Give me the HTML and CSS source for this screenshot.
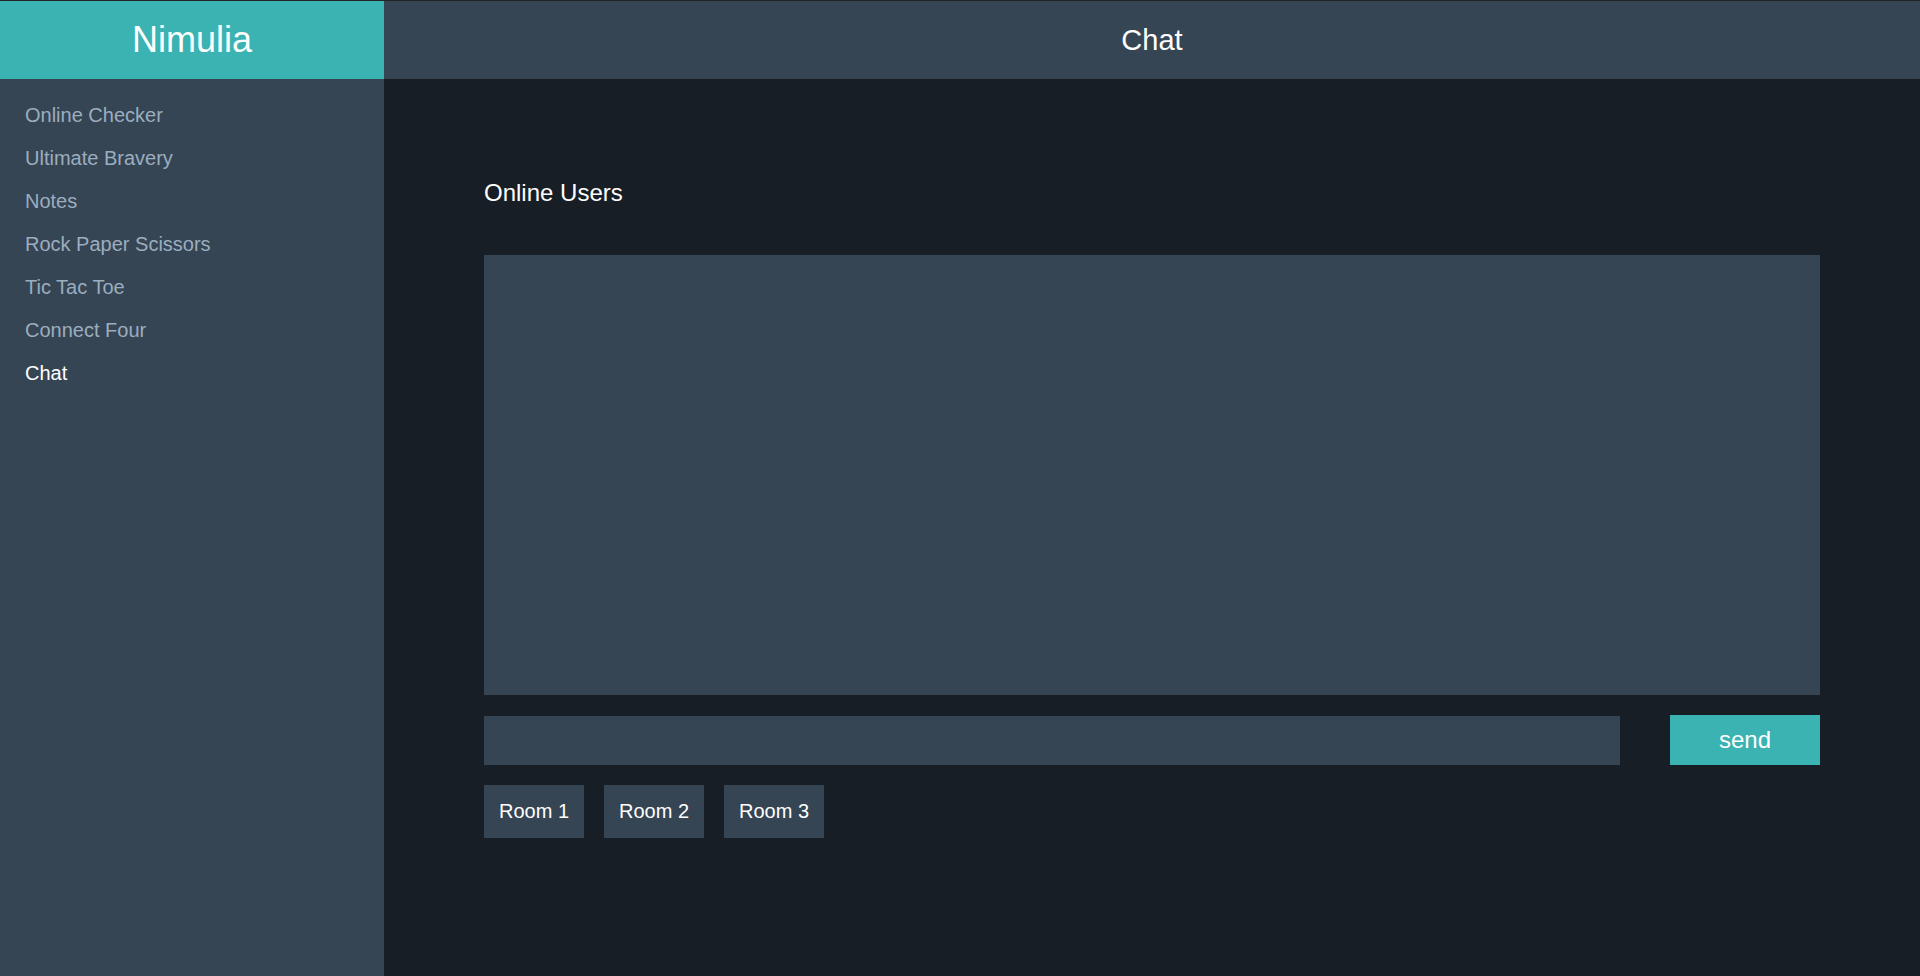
FILE: index.html
```html
<!DOCTYPE html>
<html lang="en">
<head>
<meta charset="utf-8">
<title>Nimulia - Chat</title>
<link rel="stylesheet" href="styles.css">
</head>
<body>
<div class="app">
  <div class="brand">Nimulia</div>
  <header class="topbar">Chat</header>
  <nav class="sidebar">
    <a class="nav-item" href="#">Online Checker</a>
    <a class="nav-item" href="#">Ultimate Bravery</a>
    <a class="nav-item" href="#">Notes</a>
    <a class="nav-item" href="#">Rock Paper Scissors</a>
    <a class="nav-item" href="#">Tic Tac Toe</a>
    <a class="nav-item" href="#">Connect Four</a>
    <a class="nav-item active" href="#">Chat</a>
  </nav>
  <main class="content">
    <h2 class="users-title">Online Users</h2>
    <div class="chat-box"></div>
    <div class="compose">
      <input class="msg-input" type="text">
      <button class="send-btn">send</button>
    </div>
    <div class="rooms">
      <button class="room-btn">Room 1</button>
      <button class="room-btn">Room 2</button>
      <button class="room-btn">Room 3</button>
    </div>
  </main>
</div>
</body>
</html>
```
FILE: styles.css
```css
* { box-sizing: border-box; }
html, body { margin: 0; padding: 0; height: 100%; }
body {
  font-family: "Liberation Sans", Arial, sans-serif;
  background: #171e26;
  border-top: 1px solid #232323;
}
.app {
  display: grid;
  grid-template-columns: 384px 1fr;
  grid-template-rows: 78px 1fr;
  height: calc(100vh - 1px);
}
.brand {
  background: #3ab3b2;
  color: #ffffff;
  font-size: 36px;
  display: flex;
  align-items: center;
  justify-content: center;
}
.topbar {
  background: #354554;
  color: #ffffff;
  font-size: 29px;
  display: flex;
  align-items: center;
  justify-content: center;
}
.sidebar {
  background: #354554;
  padding-top: 15px;
  display: flex;
  flex-direction: column;
}
.nav-item {
  display: block;
  padding: 10px 25px;
  line-height: 23px;
  font-size: 20px;
  color: #9cadbf;
  text-decoration: none;
}
.nav-item.active { color: #ffffff; }
.content {
  background: #171e26;
  padding: 100px;
  display: flex;
  flex-direction: column;
}
.users-title {
  margin: 0 0 48px 0;
  font-weight: normal;
  font-size: 24px;
  line-height: 28px;
  color: #ffffff;
}
.chat-box {
  background: #354554;
  height: 440px;
}
.compose {
  margin-top: 20px;
  display: flex;
  justify-content: space-between;
  align-items: flex-end;
}
.msg-input {
  width: 1136px;
  height: 49px;
  border: none;
  background: #354554;
  color: #ffffff;
  font-family: inherit;
  font-size: 20px;
  padding: 0 12px;
  outline: none;
}
.send-btn {
  width: 150px;
  height: 50px;
  border: none;
  background: #3ab3b2;
  color: #ffffff;
  font-family: inherit;
  font-size: 24px;
  padding: 0;
}
.rooms {
  margin-top: 20px;
  display: flex;
  gap: 20px;
}
.room-btn {
  width: 100px;
  height: 53px;
  border: none;
  background: #354554;
  color: #ffffff;
  font-family: inherit;
  font-size: 20px;
  padding: 0;
}
```
